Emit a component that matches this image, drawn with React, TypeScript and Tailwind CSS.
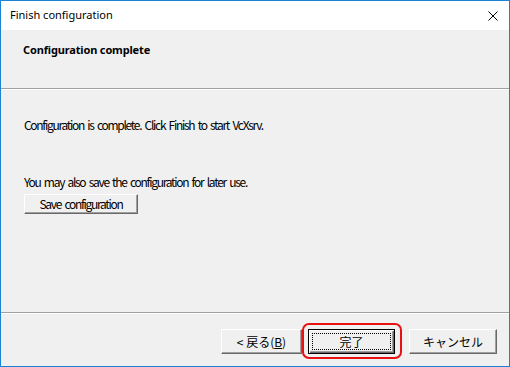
import React from 'react';

const ui = { fontFamily: '"Noto Sans", "Noto Sans CJK JP", sans-serif' };
const gothic = { fontFamily: '"Noto Sans CJK JP", "Liberation Sans", sans-serif' };

function ClassicButton({
  children,
  className = '',
}: {
  children: React.ReactNode;
  className?: string;
}) {
  return (
    <div
      className={`flex items-center justify-center bg-[#f0f0f0] border border-t-white border-l-white border-r-[#696969] border-b-[#696969] shadow-[inset_-1px_-1px_0_#a0a0a0] text-[12px] text-black ${className}`}
      style={gothic}
    >
      {children}
    </div>
  );
}

export default function App() {
  return (
    <div className="w-[510px] h-[367px] flex flex-col border border-[#1883d7] bg-[#f0f0f0] overflow-hidden">
      {/* Title bar */}
      <div className="h-[29px] shrink-0 bg-white flex items-center justify-between pl-[9px] pr-[10px]">
        <span className="text-[11px] text-black" style={ui}>
          Finish configuration
        </span>
        <svg width="10" height="10" viewBox="0 0 10 10" className="mr-[1px]">
          <path d="M0.5 0.5 L9.5 9.5 M9.5 0.5 L0.5 9.5" stroke="#000" strokeWidth="1" />
        </svg>
      </div>

      {/* Header */}
      <div className="h-[58px] shrink-0 bg-[#f0f0f0] pl-[22px] pt-[6px]">
        <span className="text-[11px] font-bold tracking-[-0.15px] text-black" style={ui}>
          Configuration complete
        </span>
      </div>
      <div className="h-[2px] shrink-0 border-t border-t-[#a0a0a0] border-b border-b-white" />

      {/* Body */}
      <div
        className="flex-1 flex flex-col pl-[23px] pt-[28px] text-[12px] text-black tracking-[-1.3px] [word-spacing:2px]"
        style={gothic}
      >
        <div className="leading-[14px]">Configuration is complete. Click Finish to start VcXsrv.</div>
        <div className="leading-[14px] mt-[43px]">You may also save the configuration for later use.</div>
        <ClassicButton className="w-[114px] h-[20px] mt-[5px]">Save configuration</ClassicButton>
      </div>

      {/* Footer */}
      <div className="h-[2px] shrink-0 border-t border-t-[#a0a0a0] border-b border-b-white" />
      <div className="h-[52px] shrink-0 flex items-start justify-end pt-[15px] pr-[12px]">
        <ClassicButton className="w-[81px] h-[25px]">
          &lt; 戻る(<span className="underline">B</span>)
        </ClassicButton>
        <div className="relative ml-[6px]">
          <div className="w-[87px] h-[25px] bg-[#f0f0f0] border border-black flex items-center justify-center shadow-[inset_1px_1px_0_#fff,inset_-1px_-1px_0_#696969,inset_-2px_-2px_0_#a0a0a0]">
            <div className="w-[79px] h-[17px] border border-dotted border-black flex items-center justify-center text-[12px] text-black" style={gothic}>
              完了
            </div>
          </div>
          <div className="absolute left-[-6px] top-[-6px] w-[100px] h-[36px] border-2 border-[#e81010] rounded-[7px] pointer-events-none" />
        </div>
        <ClassicButton className="w-[88px] h-[25px] ml-[14px]">キャンセル</ClassicButton>
      </div>
    </div>
  );
}
